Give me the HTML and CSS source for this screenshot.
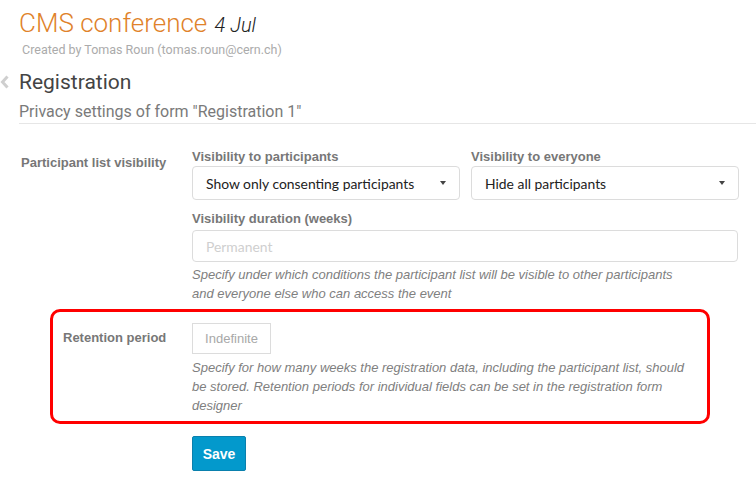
FILE: index.html
```html
<!DOCTYPE html>
<html>
<head>
<meta charset="utf-8">
<link rel="stylesheet" href="styles.css">
</head>
<body>
<div class="page">
  <header class="event-header">
    <h1 class="event-title">CMS conference <span class="event-date">4 Jul</span></h1>
    <div class="event-creator">Created by Tomas Roun (tomas.roun@cern.ch)</div>
  </header>
  <div class="page-title">
    <svg class="back-icon" width="10" height="16" viewBox="0 0 10 16"><polyline points="7.5,2.5 2.5,8 7.5,13.5" fill="none" stroke="#cfcfcf" stroke-width="3"/></svg>
    <h2 class="page-heading">Registration</h2>
  </div>
  <div class="page-subtitle">Privacy settings of form "Registration 1"</div>

  <form class="form">
    <div class="form-row">
      <div class="form-label">Participant list visibility</div>
      <div class="form-field">
        <div class="select-pair">
          <div class="field-group">
            <div class="field-label">Visibility to participants</div>
            <div class="select"><span>Show only consenting participants</span><i class="caret"></i></div>
          </div>
          <div class="field-group">
            <div class="field-label">Visibility to everyone</div>
            <div class="select"><span>Hide all participants</span><i class="caret"></i></div>
          </div>
        </div>
        <div class="field-group spaced">
          <div class="field-label">Visibility duration (weeks)</div>
          <div class="text-input"><span class="placeholder">Permanent</span></div>
        </div>
        <p class="help">Specify under which conditions the participant list will be visible to other participants and everyone else who can access the event</p>
      </div>
    </div>

    <div class="form-row highlighted">
      <div class="form-label">Retention period</div>
      <div class="form-field">
        <div class="small-input">Indefinite</div>
        <p class="help">Specify for how many weeks the registration data, including the participant list, should be stored. Retention periods for individual fields can be set in the registration form designer</p>
      </div>
    </div>

    <div class="form-actions">
      <button type="button" class="btn-save">Save</button>
    </div>
  </form>
</div>
</body>
</html>
```

FILE: styles.css
```css
html, body {
  margin: 0;
  padding: 0;
  background: #ffffff;
}
body {
  font-family: "Liberation Sans", Arial, sans-serif;
  color: #333;
}
.page {
  width: 756px;
}
.event-header {
  padding: 6px 0 0 19px;
}
.event-title {
  margin: 0;
  font-family: Roboto, sans-serif;
  font-weight: 300;
  font-size: 26px;
  line-height: 34px;
  color: #e0822a;
}
.event-date {
  font-style: italic;
  font-size: 20px;
  color: #222;
  font-weight: 300;
  margin-left: 1px;
}
.event-creator {
  font-family: Roboto, sans-serif;
  font-size: 12.5px;
  line-height: 16px;
  color: #ababab;
  padding-left: 3px;
}
.page-title {
  display: flex;
  align-items: center;
  margin-top: 11px;
  height: 26px;
}
.back-icon {
  margin: 0 9px 0 0;
}
.page-heading {
  margin: 0;
  font-family: Roboto, sans-serif;
  font-weight: 400;
  font-size: 21px;
  line-height: 26px;
  color: #444;
}
.page-subtitle {
  margin: 6px 0 0 19px;
  font-family: Roboto, sans-serif;
  font-size: 16px;
  line-height: 22px;
  color: #7a7a7a;
  padding-bottom: 0;
  border-bottom: 1px solid #e6e6e6;
}
.form {
  margin: 24px 0 0 21px;
}
.form-row {
  display: grid;
  grid-template-columns: 171px 547px;
}
.form-label {
  padding-top: 6px;
  font-weight: bold;
  font-size: 13px;
  line-height: 18px;
  color: #777;
}
.form-field {
  display: flex;
  flex-direction: column;
}
.select-pair {
  display: grid;
  grid-template-columns: 268px 268px;
  column-gap: 11px;
}
.field-label {
  font-weight: bold;
  font-size: 13px;
  line-height: 18px;
  color: #777;
}
.field-group.spaced {
  margin-top: 10px;
}
.field-group.spaced .field-label {
  margin-bottom: 2px;
}
.select {
  box-sizing: border-box;
  height: 34px;
  border: 1px solid #dcdcdc;
  border-radius: 4px;
  display: flex;
  align-items: center;
  justify-content: space-between;
  padding: 0 13px 0 13px;
  font-family: Lato, sans-serif;
  font-size: 13.9px;
  color: #222;
}
.caret {
  width: 0;
  height: 0;
  border-left: 3.5px solid transparent;
  border-right: 3.5px solid transparent;
  border-top: 4px solid #444;
}
.text-input {
  box-sizing: border-box;
  height: 32px;
  width: 546px;
  border: 1px solid #dcdcdc;
  border-radius: 4px;
  display: flex;
  align-items: center;
  padding-left: 13px;
  font-family: Lato, sans-serif;
  font-size: 13.9px;
}
.placeholder {
  color: #cfcfcf;
}
.help {
  margin: 4px 0 0 0;
  max-width: 498px;
  font-style: italic;
  font-size: 13px;
  line-height: 18.5px;
  color: #808080;
}
.highlighted {
  margin: 6px 0 0 29px;
  width: 660px;
  box-sizing: border-box;
  border: 3px solid #ff0000;
  border-radius: 10px;
  padding: 11px 0 6px 10px;
  grid-template-columns: 129px 500px;
}
.small-input {
  box-sizing: border-box;
  width: 79px;
  height: 31px;
  border: 1px solid #dcdcdc;
  display: flex;
  align-items: center;
  justify-content: center;
  font-size: 13px;
  color: #a8a8a8;
}
.highlighted .help {
  margin-top: 4px;
  line-height: 19px;
}
.form-actions {
  margin: 12px 0 0 171px;
}
.btn-save {
  box-sizing: border-box;
  width: 54px;
  height: 35px;
  background: #0399cc;
  border: 1px solid #0a80ad;
  border-radius: 2px;
  color: #fff;
  font-family: "Liberation Sans", Arial, sans-serif;
  font-weight: bold;
  font-size: 14px;
  padding: 0;
}
```
